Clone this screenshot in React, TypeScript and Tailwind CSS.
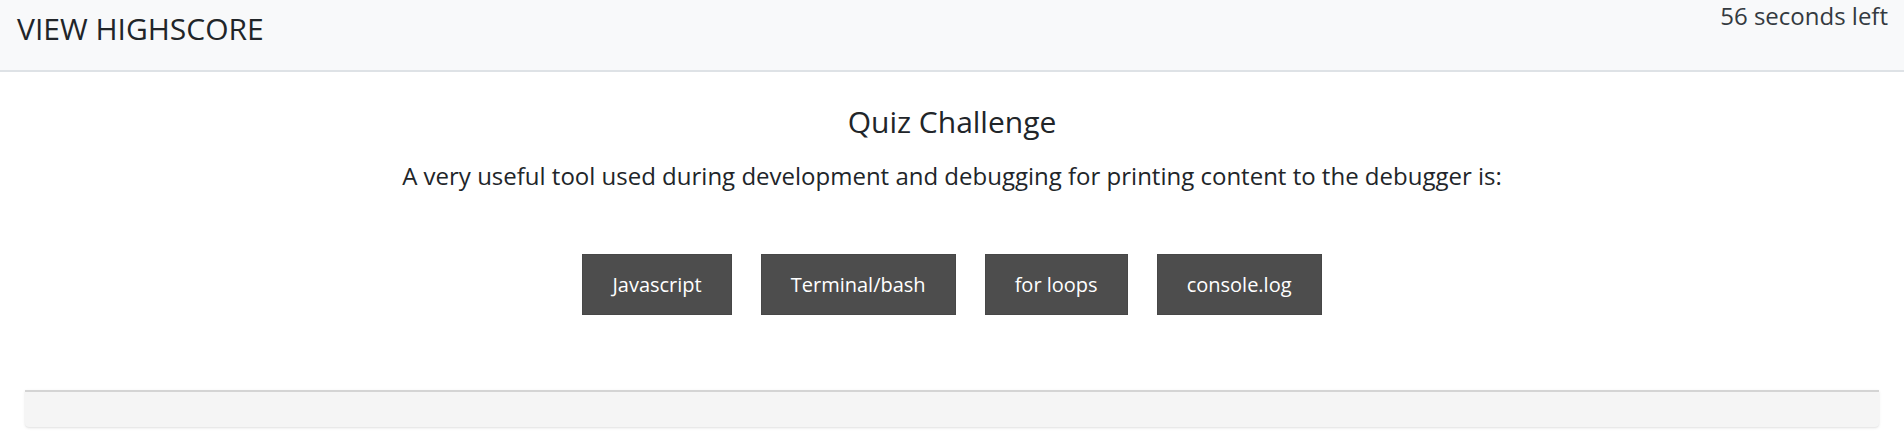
import React from "react";

const choices = ["Javascript", "Terminal/bash", "for loops", "console.log"];

export default function App() {
  return (
    <div className="min-h-screen bg-white text-[#212529] font-['Open_Sans',sans-serif]">
      <header className="flex justify-between h-[72px] bg-[#f8f9fa] border-b-2 border-[#dee2e6]">
        <a className="pl-[17px] pt-[14px] text-[30px] leading-none text-[#212529]">VIEW HIGHSCORE</a>
        <span className="pr-[16px] pt-[4px] text-[24px] leading-none text-[#343a40]">56 seconds left</span>
      </header>

      <main className="flex flex-col items-center">
        <h1 className="mt-[27px] text-[30px] leading-[1.5]">Quiz Challenge</h1>
        <p className="mt-[14px] text-[24px] leading-[1.5]">
          A very useful tool used during development and debugging for printing content to the debugger is:
        </p>
        <div className="mt-[60px] flex gap-[29px]">
          {choices.map((c) => (
            <button
              key={c}
              className="h-[61px] px-[29px] bg-[#4d4d4d] text-white text-[20px] border border-[#474747]"
            >
              {c}
            </button>
          ))}
        </div>
      </main>

      <div className="mx-[25px] mt-[75px] h-[37px] bg-[#f5f5f5] border-t-2 border-[#d4d4d4] rounded-b shadow-sm"></div>
    </div>
  );
}
